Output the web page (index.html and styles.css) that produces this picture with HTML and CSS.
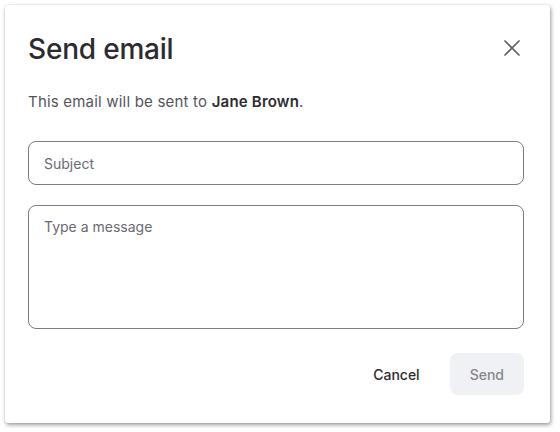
FILE: index.html
```html
<!DOCTYPE html>
<html>
<head>
<meta charset="utf-8">
<link rel="stylesheet" href="styles.css">
</head>
<body>
<div class="dialog">
  <div class="header">
    <h1 class="title">Send email</h1>
    <button class="close" aria-label="Close">
      <svg width="18" height="18" viewBox="0 0 18 18"><path d="M1.5 1.5L16.5 16.5M16.5 1.5L1.5 16.5" stroke="#5f5f66" stroke-width="1.6" fill="none"/></svg>
    </button>
  </div>
  <p class="desc">This email will be sent to <strong>Jane Brown</strong>.</p>
  <input class="field" type="text" placeholder="Subject">
  <textarea class="field area" placeholder="Type a message"></textarea>
  <div class="actions">
    <button class="btn cancel">Cancel</button>
    <button class="btn send" disabled>Send</button>
  </div>
</div>
</body>
</html>
```
FILE: styles.css
```css
html, body {
  margin: 0;
  padding: 0;
  background: #ffffff;
}
body {
  padding: 5px;
  font-family: Inter, "Noto Sans", sans-serif;
  color: #2b2b30;
}
.dialog {
  box-sizing: border-box;
  width: 545px;
  height: 418px;
  background: #fff;
  border-radius: 3px;
  box-shadow: 1px 2px 4px rgba(0,0,0,0.38), 0 0 2px rgba(0,0,0,0.12);
  padding: 24px 26px 0 23px;
  display: flex;
  flex-direction: column;
}
.header {
  display: flex;
  justify-content: space-between;
  align-items: flex-start;
  height: 48px;
}
.title {
  margin: 0;
  font-size: 28px;
  font-weight: 500;
  line-height: 40px;
  letter-spacing: -0.2px;
  color: #2b2b30;
}
.close {
  border: 0;
  background: none;
  padding: 0;
  margin-top: 10px;
  margin-right: 3px;
  width: 18px;
  height: 18px;
  cursor: pointer;
}
.desc {
  margin: 14px 0 0;
  font-size: 15px;
  line-height: 22px;
  letter-spacing: 0.2px;
  color: #55555c;
}
.desc strong {
  font-weight: 600;
  color: #2b2b30;
}
.field {
  box-sizing: border-box;
  width: 496px;
  font-family: inherit;
  font-size: 14px;
  color: #2b2b30;
  border: 1px solid #7d7d85;
  border-radius: 8px;
  background: #fff;
  outline: none;
}
.field::placeholder {
  color: #6a6a72;
}
input.field {
  height: 44px;
  margin-top: 28px;
  padding: 0 15px;
}
.area {
  height: 124px;
  margin-top: 20px;
  padding: 11px 15px;
  resize: none;
  line-height: 20px;
}
.actions {
  display: flex;
  justify-content: flex-end;
  gap: 10px;
  margin-top: 24px;
  width: 496px;
}
.btn {
  font-family: inherit;
  font-size: 14px;
  font-weight: 500;
  height: 42px;
  padding: 0 20px;
  border: 0;
  border-radius: 8px;
  background: none;
}
.cancel {
  color: #2b2b30;
}
.send {
  background: #f0f1f4;
  color: #86868e;
}
```
